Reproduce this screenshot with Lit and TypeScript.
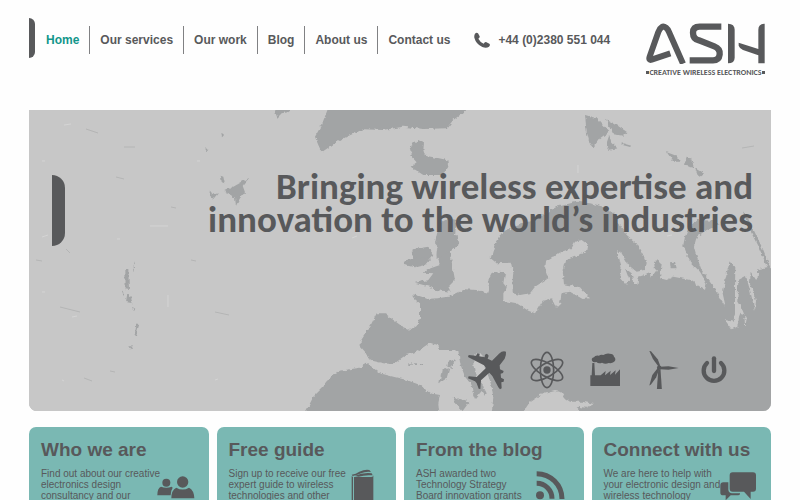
import { LitElement, html, svg, css, TemplateResult } from "lit";
import { customElement, property } from "lit/decorators.js";

const plane = html`<svg width="40" height="40" viewBox="383 362 120 120" fill="currentColor" aria-hidden="true">
  <path d="M500 367Q490 363 479 373L458 394L445 388L448 379L443 373L437 376L436 384L420 381L421 375L415 372L410 379L388 377L386 383L434 408L440 416L412 443L388 441L386 447L407 456L412 462L418 478L423 479L425 453L450 430L459 440L477 474L482 480L487 477L486 459L493 457L494 450L485 445L484 433L491 431L493 425L482 420L481 408L496 388Q501 378 500 367Z"/>
</svg>`;

const atom = html`<svg width="36" height="40" viewBox="568 358 104 120" fill="none" stroke="currentColor" stroke-width="5" aria-hidden="true">
  <ellipse cx="620" cy="418" rx="20" ry="53"/>
  <ellipse cx="620" cy="418" rx="20" ry="53" transform="rotate(60 620 418)"/>
  <ellipse cx="620" cy="418" rx="20" ry="53" transform="rotate(-60 620 418)"/>
  <circle cx="620" cy="418" r="11" fill="currentColor" stroke="none"/>
</svg>`;

const factory = html`<svg width="40" height="36" viewBox="110 370 120 108" fill="currentColor" aria-hidden="true">
  <path d="M120 472V440H124L126 403H132L134 440H151L166 427L164 440L181 426L179 439L196 425L194 438L209 422V472Z"/>
  <path d="M125 396Q122 388 131 386Q134 379 146 381Q150 377 159 379Q168 373 178 375Q190 375 191 384Q198 390 193 398Q188 405 175 403Q165 408 155 402Q145 406 138 400Q128 402 125 396Z"/>
</svg>`;

const turbine = html`<svg width="30" height="40" viewBox="297 358 91 120" fill="currentColor" aria-hidden="true">
  <path d="M325 418H332L336 476H321Z"/>
  <circle cx="328" cy="411" r="7"/>
  <path d="M325 407L309 385L298 360L303 361L324 386L331 405Z"/>
  <path d="M331 408L356 407L387 412L356 417L331 416Z"/>
  <path d="M323 413L307 433L298 465L303 462L319 440L328 416Z"/>
</svg>`;

const power = html`<svg width="26" height="30" viewBox="453 376 78 90" fill="none" stroke="currentColor" stroke-width="13" stroke-linecap="round" aria-hidden="true">
  <path d="M471 400A31 31 0 1 0 513 400"/>
  <path d="M492 386V424"/>
</svg>`;

const people = html`<svg width="38" height="34" viewBox="410 158 114 102" fill="currentColor" aria-hidden="true">
  <circle cx="438" cy="202" r="12"/>
  <path d="M411 240Q411 218 422 214Q438 220 454 214L457 217Q451 226 451 240Z"/>
  <circle cx="487" cy="200" r="17"/>
  <path d="M453 249Q453 224 468 217Q487 228 506 217Q521 224 522 249Z"/>
</svg>`;

const book = html`<svg width="38" height="44" viewBox="404 160 114 132" fill="currentColor" aria-hidden="true">
  <path d="M427 180Q440 178 450 171Q468 163 480 166L485 172Q468 170 455 176Q446 181 430 184Z"/>
  <path d="M436 184Q460 173 487 176L490 182Q465 180 448 186Z"/>
  <path d="M427 184L431 187V290H427Z"/>
  <path d="M434 187H486Q492 187 492 182V290H434Z"/>
</svg>`;

const feed = html`<svg width="38" height="38" viewBox="414 164 114 114" fill="none" stroke="currentColor" stroke-width="15" aria-hidden="true">
  <circle cx="438" cy="246" r="12" fill="currentColor" stroke="none"/>
  <path d="M428 210A46 46 0 0 1 474 256"/>
  <path d="M428 181A76 76 0 0 1 504 257"/>
</svg>`;

const chat = html`<svg width="38" height="34" viewBox="417 164 114 102" fill="currentColor" aria-hidden="true">
  <path d="M430 207H445V229Q446 239 456 240H480V242Q479 246 474 246H452L437 261V246H430Q421 246 421 238V216Q421 207 430 207Z"/>
  <path d="M458 177H519Q528 177 528 186V226Q528 235 519 235H512V257L492 235H458Q449 235 449 226V186Q449 177 458 177Z"/>
</svg>`;

@customElement("ash-logo")
class AshLogo extends LitElement {
  static styles = css`
    :host { display: block; color: #58595b; }
    svg { display: block; }
    .tag {
      display: flex; align-items: center; justify-content: space-between;
      margin-top: 4px; padding: 0 2px 0 1px;
      font: 700 8px/9px Carlito, Calibri, sans-serif;
      white-space: nowrap;
    }
    .dot { width: 3px; height: 3px; background: currentColor; }
  `;
  render() {
    return html`
      <svg width="122" height="41" viewBox="30 36 366 123" fill="none" stroke="currentColor" stroke-width="19" role="img" aria-label="ASH">
        <path d="M106 127L50 146Q40 149 44 137L70 63Q79 40 93 50Q98 54 102 63L144 158" stroke-width="18" stroke-linejoin="round"/>
        <path d="M259 47H194Q174 47 174 65Q174 84 192 88L238 106Q256 113 254 130Q252 148 234 148H164"/>
        <path d="M279 38Q299 38 299 56V140Q299 157 279 157Z" fill="currentColor" stroke="none"/>
        <path d="M389 38Q370 38 370 56V114L311 95V104Q314 113 324 117L370 133V157H389Z" fill="currentColor" stroke="none"/>
      </svg>
      <div class="tag"><span class="dot"></span><span>CREATIVE WIRELESS ELECTRONICS</span><span class="dot"></span></div>
    `;
  }
}

@customElement("world-map")
class WorldMap extends LitElement {
  static styles = css`
    :host { display: block; }
    svg { display: block; width: 100%; height: 100%; }
    .land { fill: #a2a4a5; }
    .sea { fill: #c7c7c7; }
    .fleck { stroke: #b4b5b5; stroke-width: 1; fill: none; }
    .glint { stroke: #d4d4d4; stroke-width: 1; fill: none; }
  `;
  render() {
    return html`<svg viewBox="29 110 742 301" preserveAspectRatio="xMidYMid slice" aria-hidden="true">
      <defs>
        <filter id="coast" x="0" y="0" width="1" height="1" color-interpolation-filters="sRGB">
          <feTurbulence type="fractalNoise" baseFrequency="0.25" numOctaves="2" seed="4" result="n"/>
          <feDisplacementMap in="SourceGraphic" in2="n" scale="4" xChannelSelector="R" yChannelSelector="G"/>
        </filter>
      </defs>
      <rect class="sea" x="29" y="110" width="742" height="301"/>
      <g filter="url(#coast)">
        <rect class="sea" x="0" y="90" width="800" height="341"/>
        ${svg`
        <g class="land" transform="translate(550 230) scale(.3333)">
          <path d="M-175 75L-165 40L-150 15L-110 -10L-50 -30L-20 -45L20 -70L80 -85L120 -80L160 -70L190 -50L190 -30L210 -15L230 15L260 40L280 75L290 100L285 120L260 125L235 105L215 70L200 60L215 110L210 145L228 165L238 150L225 115L245 130L250 162L262 162L266 140L300 130L302 145L320 120L320 90L335 100L330 145L350 150L370 140L420 150L465 180L470 160L450 125L420 95L400 45L405 20L415 -5L440 -30L490 -28L510 -15L470 0L440 20L432 50L440 80L455 120L490 170L527 230L518 190L530 130L540 92L556 112L555 180L555 250L550 275L525 270L545 298L562 290L570 248L582 252L586 292L590 270L575 235L562 215L565 150L588 138L600 180L615 242L618 212L600 160L602 125L622 155L625 118L650 112L700 112V600H-180L-170 500L-175 470L-185 435L-200 400L-203 378L-218 370L-230 373V405L-225 425L-215 450L-200 470L-190 490L-195 498L-205 483L-215 495L-225 507L-232 490L-235 465L-255 440L-270 400L-275 362L-295 360L-330 360L-340 345L-360 338L-380 352L-400 365L-430 372L-445 385L-470 403L-500 400L-530 393L-545 385L-555 365L-568 350L-568 330L-555 310L-535 280L-520 250L-495 250L-470 270L-440 292L-420 300L-400 285L-390 265V220L-405 208L-410 193L-385 200L-368 207L-340 205L-305 200L-285 192L-255 178L-220 180L-185 188L-180 170L-185 150L-175 132L-150 125L-135 130L-140 160L-120 185L-110 130L-118 98L-160 100L-178 85Z"/>
          <path d="M312 95L325 95L330 115L315 118ZM360 97L375 95L380 115L362 115Z"/>
          <path d="M578 -57L592 -40L640 60L665 122L655 118L630 60L600 0Z"/>
        </g>
        <g class="sea" transform="translate(550 230) scale(.3333)">
          <path d="M115 45L95 30L75 35L65 55L35 65L10 82L-12 95L-15 115L-5 145L-45 170L-60 190L-90 195L-112 190L-112 130L-135 135L-128 170L-140 190L-140 212L-100 220L-65 242L-45 250L-22 212L5 205L18 233L30 222L35 190L60 185L98 207L120 205L90 172L42 163L38 120L45 92L80 78L112 60Z"/>
          <path d="M-90 560L-60 515L-30 495L0 487L15 483L35 487L45 505L60 515L100 515L132 522L110 533L80 530L105 560Z"/>
        </g>
        <g class="land" transform="translate(340 230) scale(.3333)">
          <path d="M-115 570L-80 500L-50 470L-20 432L0 422L60 413L80 398L95 410L120 430L160 440L200 450L240 465L270 490L300 495L295 520L300 570Z"/>
          <path d="M290 15L300 -20L325 -35L350 -30L345 15L355 45L330 65L335 95L345 150L325 170L332 185L290 180L270 170L225 158L265 150L280 130L250 128L272 115L300 105L290 75L302 60L285 40Z"/>
          <path d="M192 92L220 85L218 58L265 50L280 75L255 105L225 112L192 105Z"/>
          <path d="M325 395L345 388L335 414L322 410ZM305 420L328 415L320 445L298 460ZM338 500L388 515L368 543L345 520Z"/>
          <path d="M205 400h10v5h-10zM223 400h8v5h-8zM240 400h9v5h-9z"/>
        </g>
        <g class="land" transform="translate(190 105) scale(.3333)">
          <path d="M422 -10L395 60L375 95L385 120L395 142L430 118L470 95L520 73L580 75L640 65L700 72L770 70L790 45L830 15V-10Z"/>
          <path d="M660 150L665 138L660 120L685 105L702 115L700 135L705 152L740 158L772 165L775 185L760 210L700 210L662 185L680 172Z"/>
          <path d="M245 -10L300 -10L298 20L275 25L262 38L255 20Z"/>
          <path d="M103 258L130 245L178 218L158 242L165 262L150 280L138 302L135 278ZM92 212L100 215L104 235L96 232ZM60 255L66 270L84 265L70 282L58 270Z"/>
          <path d="M740 440L750 395L800 390L805 420L770 445L740 460ZM665 440L720 430L728 455L670 460Z"/>
        </g>
        <g class="land" transform="translate(480 105) scale(.3333)">
          <path d="M315 30L350 40L387 80L360 100L340 127L328 110L320 80ZM378 42L410 60L442 82L430 92L400 88ZM388 90L395 115L412 130L388 134L378 120Z"/>
          <path d="M558 138L585 148L602 170L580 170ZM620 158L633 160L642 188L612 182ZM645 190L675 208L655 216ZM428 115L454 122L450 126L428 120Z"/>
        </g>
        <g class="land" transform="translate(20 100) scale(.3333)">
          <path d="M316 510L325 510L327 570L317 568ZM322 580L330 585L338 610L318 606ZM336 620L346 626L342 634ZM350 670L358 672L348 708L344 704ZM328 738L338 740L334 748ZM338 500L344 480L340 520ZM306 575L314 578L310 588Z"/>
          <path d="M555 145L564 147L560 154ZM604 102L612 106L606 112Z"/>
        </g>`}
      </g>
      <path class="fleck" d="M36 260l6 1M171 207l5 1M191 260l5 1M60 307l20 5M116 177l8 2M124 147h11M86 129l12 4M215 312l14 3M84 378l8 3M110 371l5 1M66 249l4 4M742 148l12 -2"/>
      <path class="glint" d="M42 237l6 -2M64 125l7 -1M42 161h3M117 239h3M150 226h18M62 380l2 1M168 295v12M72 317l5 -1M197 161h3M215 380l3 -1M352 238l5 -2M667 236l5 -1M42 292h3M578 165v8"/>
    </svg>`;
  }
}

@customElement("info-card")
class InfoCard extends LitElement {
  @property() heading = "";
  @property({ attribute: false }) lines: string[] = [];
  @property({ attribute: false }) icon: TemplateResult = html``;

  static styles = css`
    :host {
      display: block; box-sizing: border-box;
      padding: 11px 14px 24px 12px;
      border-radius: 7px; background: #7ab8b3; color: #58595b;
    }
    h2 { margin: 0; font-size: 19px; line-height: 24px; white-space: nowrap; }
    .body { display: flex; justify-content: space-between; margin-top: 6px; }
    p { margin: 0; flex: none; width: 114px; font-size: 10px; line-height: 11px; white-space: nowrap; }
    .icon { flex: none; }
    svg { display: block; }
  `;
  render() {
    return html`
      <h2>${this.heading}</h2>
      <div class="body">
        <p>${this.lines.map((l, i) => (i ? html`<br />${l}` : l))}</p>
        <div class="icon">${this.icon}</div>
      </div>
    `;
  }
}

const cards = [
  { heading: "Who we are", lines: ["Find out about our creative", "electronics design", "consultancy and our"], icon: people },
  { heading: "Free guide", lines: ["Sign up to receive our free", "expert guide to wireless", "technologies and other"], icon: book },
  { heading: "From the blog", lines: ["ASH awarded two", "Technology Strategy", "Board innovation grants"], icon: feed },
  { heading: "Connect with us", lines: ["We are here to help with", "your electronic design and", "wireless technology"], icon: chat },
];

@customElement("app-root")
class AppRoot extends LitElement {
  static styles = css`
    :host {
      display: block; box-sizing: border-box; min-height: 100vh; padding: 18px 29px 0;
      background: #fefefe; color: #58595b;
      font-family: "Liberation Sans", Arial, sans-serif;
    }
    header { display: flex; align-items: flex-start; padding-bottom: 33px; }
    .tab { width: 6px; height: 40px; border-radius: 0 6px 6px 0; background: #58595b; }
    nav { margin: 8px 0 0 1px; }
    ul { display: flex; margin: 0; padding: 0; list-style: none; }
    li { padding: 0 10px; font-size: 12px; font-weight: bold; line-height: 28px; white-space: nowrap; }
    li + li { border-left: 1px solid #808183; }
    a { color: inherit; text-decoration: none; }
    .current { color: #12968b; }
    .phone {
      display: flex; align-items: center; gap: 8px; margin: 8px 0 0 14px;
      font-size: 12px; font-weight: bold; line-height: 28px; white-space: nowrap;
    }
    ash-logo { margin: 5px 4px 0 auto; }
    .hero {
      position: relative; display: grid; grid-template-columns: auto 1fr; row-gap: 104px;
      padding: 60px 18px 21px 23px; border-radius: 0 0 8px 8px; overflow: hidden;
      background: #c7c7c7;
    }
    world-map { position: absolute; inset: 0; }
    .mark { position: relative; width: 13px; height: 71px; margin-top: 5px; border-radius: 0 13px 13px 0; background: #58595b; }
    h1 {
      position: relative; margin: 0; text-align: right;
      font: 700 37px/33px Carlito, Calibri, Lato, sans-serif;
    }
    .icons {
      position: relative; grid-column: 1 / -1; display: flex; justify-content: flex-end;
      align-items: center; gap: 22px; padding-right: 26px;
    }
    .icons svg { display: block; }
    .cards { display: grid; grid-template-columns: repeat(4, 1fr); gap: 8px; margin-top: 16px; }
  `;
  render() {
    const links = ["Home", "Our services", "Our work", "Blog", "About us", "Contact us"];
    return html`
      <header>
        <div class="tab"></div>
        <nav><ul>${links.map((l, i) => html`<li><a href="#" class=${i ? "" : "current"}>${l}</a></li>`)}</ul></nav>
        <div class="phone">
          <svg width="16" height="16" viewBox="0 0 48 48" fill="currentColor" aria-hidden="true">
            <path d="M3 5Q8 0 12 4L17 13Q18 17 13 20Q18 30 29 35Q32 29 36 30L46 35Q50 39 45 44Q37 50 25 45Q6 36 1 17Q0 9 3 5Z"/>
          </svg>
          <span>+44 (0)2380 551 044</span>
        </div>
        <ash-logo></ash-logo>
      </header>
      <main>
        <section class="hero">
          <world-map></world-map>
          <div class="mark"></div>
          <h1>Bringing wireless expertise and<br />innovation to the world’s industries</h1>
          <div class="icons">${plane}${atom}${factory}${turbine}${power}</div>
        </section>
        <section class="cards">
          ${cards.map((c) => html`<info-card .heading=${c.heading} .lines=${c.lines} .icon=${c.icon}></info-card>`)}
        </section>
      </main>
    `;
  }
}
